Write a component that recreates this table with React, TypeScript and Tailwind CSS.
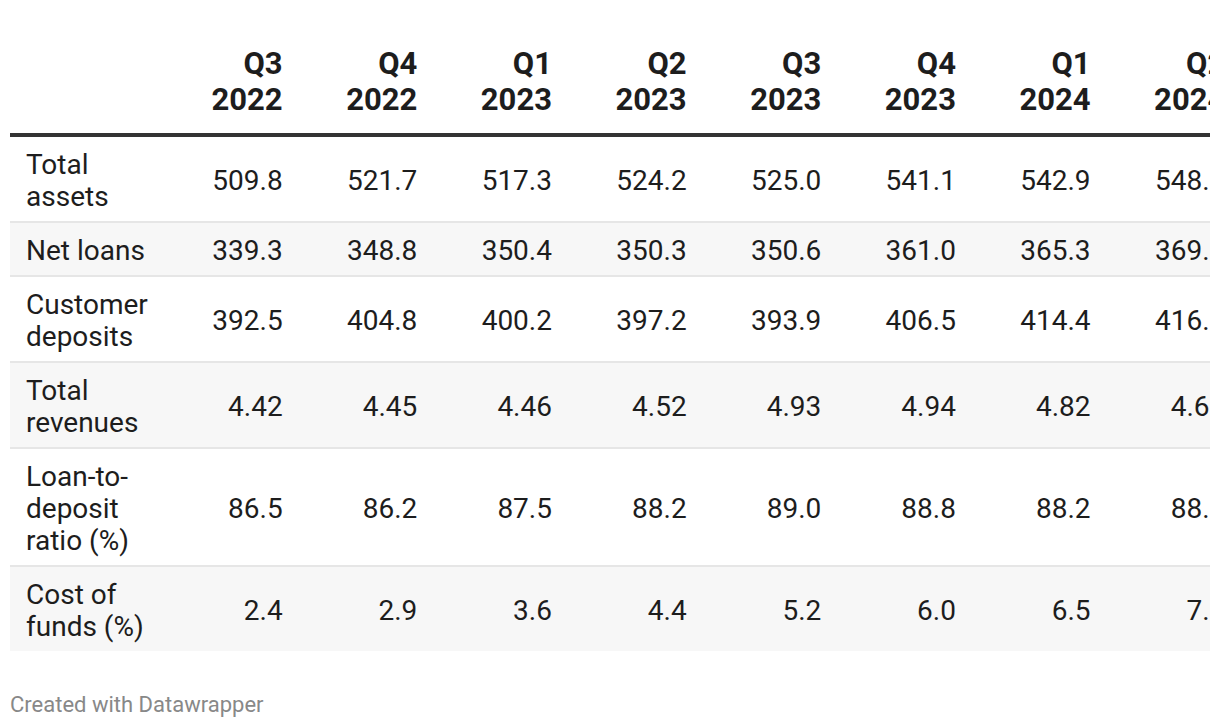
import React from 'react';

const quarters = [
  ['Q3', '2022'],
  ['Q4', '2022'],
  ['Q1', '2023'],
  ['Q2', '2023'],
  ['Q3', '2023'],
  ['Q4', '2023'],
  ['Q1', '2024'],
  ['Q2', '2024'],
];

const rows = [
  { label: 'Total assets', values: ['509.8', '521.7', '517.3', '524.2', '525.0', '541.1', '542.9', '548.5'] },
  { label: 'Net loans', values: ['339.3', '348.8', '350.4', '350.3', '350.6', '361.0', '365.3', '369.8'] },
  { label: 'Customer deposits', values: ['392.5', '404.8', '400.2', '397.2', '393.9', '406.5', '414.4', '416.2'] },
  { label: 'Total revenues', values: ['4.42', '4.45', '4.46', '4.52', '4.93', '4.94', '4.82', '4.66'] },
  { label: 'Loan-to-deposit ratio (%)', values: ['86.5', '86.2', '87.5', '88.2', '89.0', '88.8', '88.2', '88.9'] },
  { label: 'Cost of funds (%)', values: ['2.4', '2.9', '3.6', '4.4', '5.2', '6.0', '6.5', '7.0'] },
];

export default function App() {
  return (
    <div className="min-h-screen bg-white font-[Roboto,sans-serif] text-[#1d1d1d]">
      <div className="mx-[10px] w-[1200px] overflow-hidden pt-[36px]">
        <table className="w-[1228px] table-fixed border-collapse">
          <colgroup>
            <col className="w-[151px]" />
            {quarters.map((_, i) => (
              <col key={i} className="w-[134.67px]" />
            ))}
          </colgroup>
          <thead>
            <tr className="border-b-4 border-[#333333]">
              <th className="pt-[10px] pb-[15px]" />
              {quarters.map(([q, y], i) => (
                <th
                  key={i}
                  className="pt-[10px] pb-[15px] pr-[13px] text-right align-bottom text-[31px] leading-[36px] font-bold whitespace-nowrap"
                >
                  <span className="block">{q}</span>
                  <span className="block">{y}</span>
                </th>
              ))}
            </tr>
          </thead>
          <tbody>
            {rows.map((row, r) => (
              <tr
                key={row.label}
                className={`${r % 2 === 1 ? 'bg-[#f7f7f7]' : 'bg-white'} ${r > 0 ? 'border-t-2 border-[#e6e6e6]' : ''}`}
              >
                <td className="pt-[12px] pb-[8px] pl-[16px] pr-[4px] text-[28px] leading-[32px] align-middle">
                  {row.label}
                </td>
                {row.values.map((v, i) => (
                  <td
                    key={i}
                    className="pt-[12px] pb-[8px] pr-[13px] text-right text-[28px] leading-[32px] align-middle whitespace-nowrap"
                  >
                    {v}
                  </td>
                ))}
              </tr>
            ))}
          </tbody>
        </table>
        <div className="mt-[41px] text-[22px] leading-[26px] text-[#888888]">Created with Datawrapper</div>
      </div>
    </div>
  );
}
